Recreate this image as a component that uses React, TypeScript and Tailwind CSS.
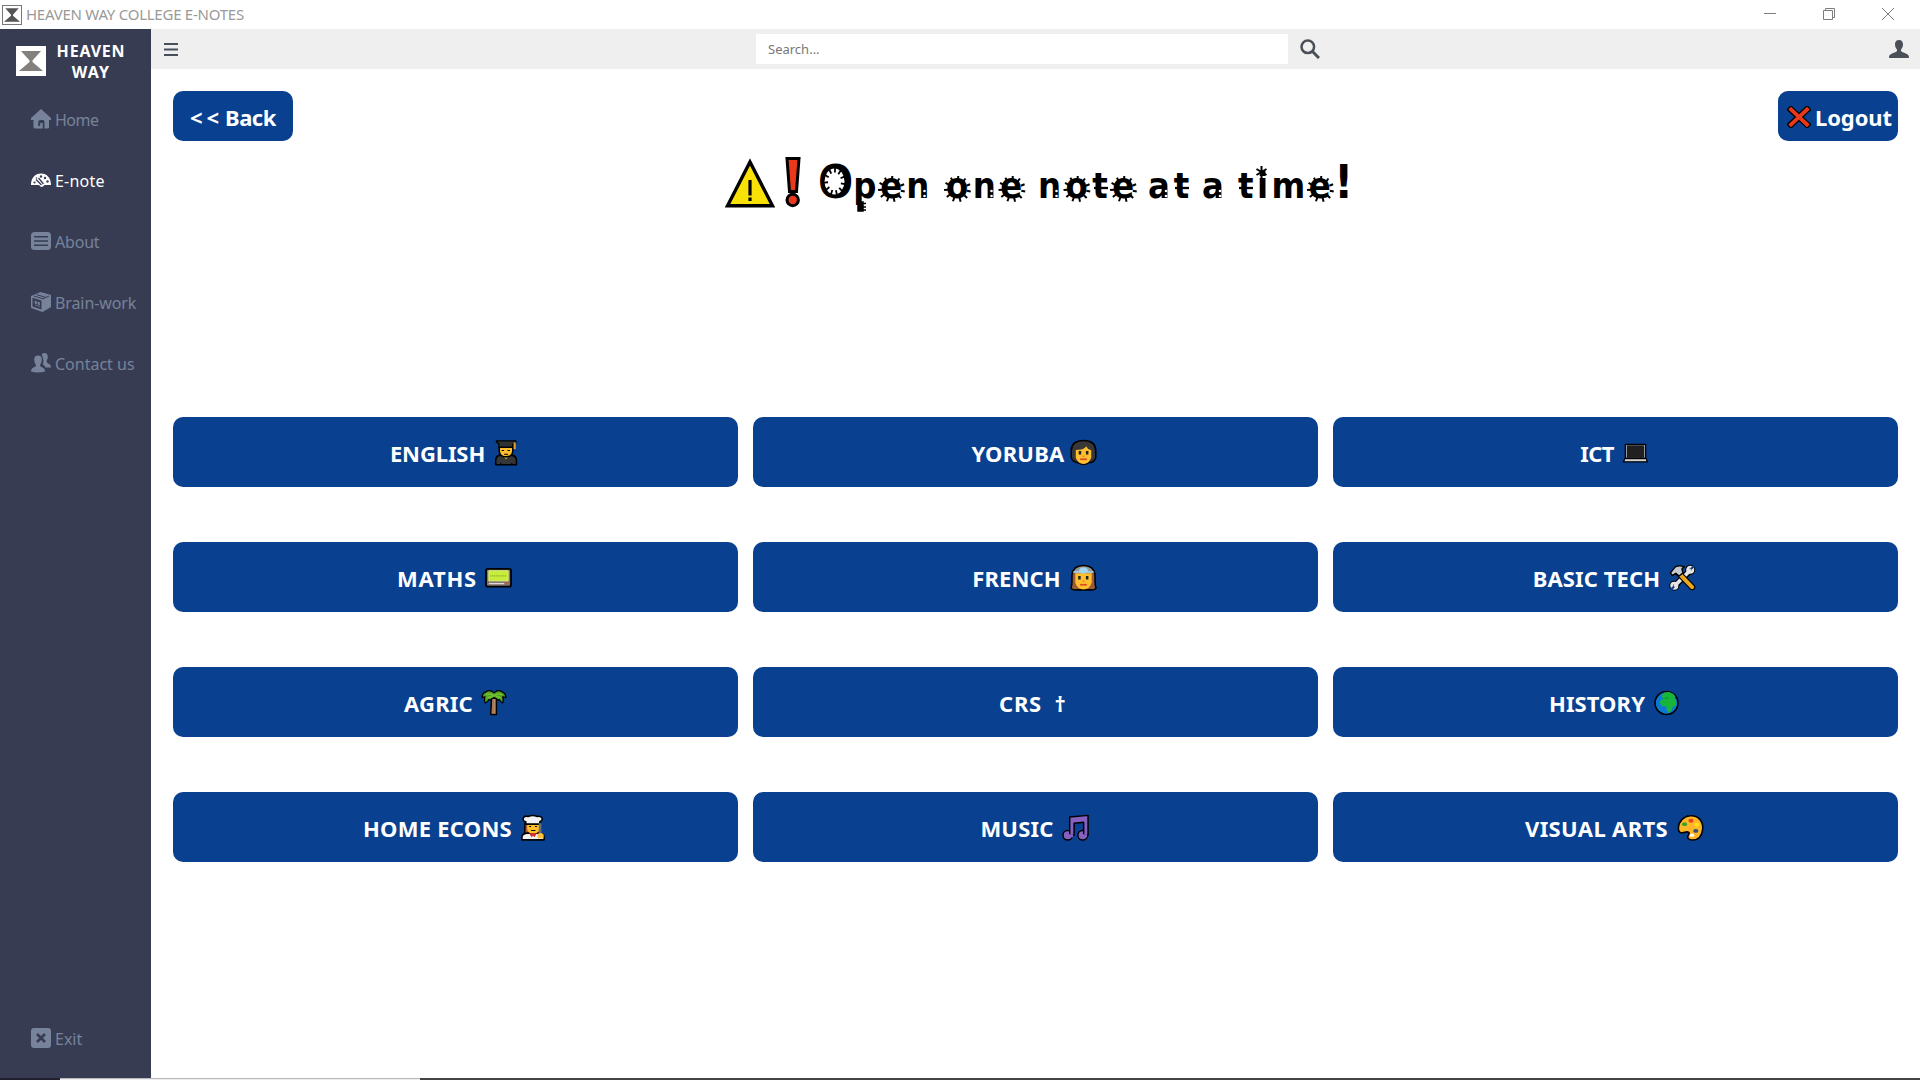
import React from "react";

type Icon = () => React.ReactElement;

const Emoji = ({ children }: { children: React.ReactNode }) => (
  <svg viewBox="0 0 28 28" className="h-7 w-[27px] shrink-0" stroke="#000" strokeWidth="1.6" strokeLinejoin="round">
    {children}
  </svg>
);

const Graduate: Icon = () => (
  <Emoji>
    <path d="M2.8 26.2v-4.5q0-5 5-5.5h11q5.500.5 5.500 5.500v4.500z" fill="#353638" />
    <path d="M10 16.500l3.500 4 3.500-4z" fill="#ffc83d" stroke="none" />
    <path d="M6.500 8h14v4.500q-1 5.500-7 5.500t-7-5.500z" fill="#ffbf2e" />
    <path d="M6 8V4.500L3.500 2.500v-1h20.200v2L20.500 5v3H6z" fill="#303234" strokeWidth="1.300" />
    <path d="M22.500 3v7" stroke="#e89b1c" strokeWidth="2.200" />
    <path d="M9 11.500h2.500M15 11.500h2.500M11.500 15.300h4" strokeWidth="1.100" />
    <path d="M8 24v2M19.500 24v2" strokeWidth="1.200" />
  </Emoji>
);

const Woman: Icon = () => (
  <Emoji>
    <path d="M1.300 11Q2 1 14 1t12.700 10v8q-1.500 5-6.500 5h-1q-5 4-10.400 0H8q-5-.500-6.700-5z" fill="#383838" />
    <path d="M6 11q8 0 11-4 1.500 3.500 5 4v8q-2.500 6.500-8 6.500T6 19z" fill="#ffbf2e" stroke="none" />
    <path d="M9 12h2.600v3.500H9zM16.500 12h2.600v3.500h-2.600z" fill="#222" stroke="none" />
    <path d="M10.500 20.500h7" stroke="#dc4b20" strokeWidth="1.800" />
    <path d="M13 17.300h2" stroke="#ec7b3d" strokeWidth="1.200" />
  </Emoji>
);

const Bride: Icon = () => (
  <Emoji>
    <path d="M2 11Q3 1 14 1t12 10v7q0 4 1 6.500-2 2.500-6 1.800H7q-4 .7-6-1.800 1-2.500 1-6.500z" fill="#9a5b37" />
    <path d="M5.500 9h17v10q-2.500 7-8.500 7t-8.500-7z" fill="#ffbf2e" stroke="none" />
    <path d="M3.500 8.500Q6 2 14 2t10.500 6.500z" fill="#8a9aa5" stroke="none" />
    <path d="M3.500 7.800h21M11.500 4h5l1.500 2.500-2 2h-4l-2-2z" stroke="#a5d6ee" fill="#a5d6ee" strokeWidth="1.600" />
    <path d="M8.500 12h2.600v3.500H8.500zM16.500 12h2.600v3.500h-2.600z" fill="#222" stroke="none" />
    <path d="M10.500 21H17.500" stroke="#dc4b20" strokeWidth="1.800" />
    <path d="M13 17.300h2" stroke="#ec7b3d" strokeWidth="1.200" />
  </Emoji>
);

const Laptop: Icon = () => (
  <Emoji>
    <path d="M3.500 5h21v14.500h-21z" fill="#b9bcc0" strokeWidth="1.400" />
    <path d="M5 6h18v13H5z" fill="#202020" stroke="none" />
    <path d="M3.300 19.500h21.400l1.800 3.600H1.500z" fill="#d2d3d5" strokeWidth="1.300" />
    <path d="M4 20.800h20" stroke="#a2a4a7" strokeWidth="1" />
  </Emoji>
);

const Pager: Icon = () => (
  <Emoji>
    <rect x="1" y="4.500" width="26" height="18.500" rx="2" fill="#85726c" strokeWidth="1.900" />
    <path d="M4 6.500h20v10.500H4z" fill="#c6ec3c" stroke="#d9f27a" strokeWidth="1" />
    <path d="M5.500 11.800h17" stroke="#9fbf2e" strokeWidth="2" strokeDasharray="1.200 .7" />
    <path d="M4 19.800h16" stroke="#ddd" strokeWidth="1.300" />
    <path d="M20.500 19.800H24" stroke="#e24b32" strokeWidth="1.300" />
  </Emoji>
);

const Tools: Icon = () => (
  <Emoji>
    <g strokeLinecap="round" fill="none">
      <path d="M5.500 22.500L22.500 6" strokeWidth="6.500" />
      <circle cx="5.500" cy="22" r="3" strokeWidth="4.500" />
      <circle cx="22" cy="5.500" r="3" strokeWidth="4.500" />
      <path d="M6.500 21.500L21.500 6.500" stroke="#e3e5e8" strokeWidth="3.800" />
      <circle cx="5.500" cy="22" r="2.800" stroke="#e3e5e8" strokeWidth="2.800" />
      <circle cx="22" cy="5.500" r="2.800" stroke="#e3e5e8" strokeWidth="2.800" />
      <path d="M4.500 23.500L1.500 26.500M23.500 4L26.500 1" stroke="#094190" strokeWidth="2.200" />
      <path d="M10 9L24 23.500" strokeWidth="6.500" />
      <path d="M12 11L24 23.500" stroke="#e9a820" strokeWidth="4.200" />
    </g>
    <path d="M1.500 8.500l5-6Q11 .500 16 2.500q-3 1-2.500 3l1 3-4 3.500-3.500-3-3.500 2.500z" fill="#c6c9cd" strokeWidth="1.400" />
  </Emoji>
);

const Palm: Icon = () => (
  <Emoji>
    <path d="M11 9h5v17h-6z" fill="#b58a67" />
    <path d="M12.500 11v13" stroke="#977050" strokeWidth="1.200" />
    <path d="M13.500 3.500Q9-.500 5 2.500 1 4 1 8.500l3-1q-1 3.500.500 6.500 2.500-1 3.500-3.500l2 .5q1-2 3.500-2.500 2.500.500 4 2.500l1.500-.5q1.500 2.500 3.500 3.500 1-3.500 0-6.500l3.500 1Q25.500 4 22 2.500q-4-3-8.500 1z" fill="#4fa325" strokeWidth="1.300" />
    <path d="M5 5.500q5-2 8.500 1 3.500-3 8.500-1M6.500 9q3-2 6-1.500M20.500 9q-3-2-5-1.500" stroke="#78c032" strokeWidth="1.700" fill="none" />
  </Emoji>
);

const Globe: Icon = () => (
  <Emoji>
    <circle cx="14" cy="14" r="11.900" fill="#0c78d4" />
    <path d="M8 7l4-4 5-.5 4 2 2.500 3-2 1 2.500 2-1 2 1.500.500-1 4-3 1-1 3.500-3 3-2.500-4v-3l-5-.500-2-3.500 1.500-3 3-1z" fill="#17b53a" stroke="none" />
    <path d="M12 9h4" stroke="#0a9030" strokeWidth="1" />
  </Emoji>
);

const Cook: Icon = () => (
  <Emoji>
    <path d="M5 9h17v14H5z" fill="#a65f36" />
    <path d="M2 26.300v-2.500q0-4 5-4.500h13q5 .500 5 4.500v2.500z" fill="#f3f3f3" />
    <path d="M7.500 10H20v5.500q-1.500 4.500-6.200 4.500T7.500 15.500z" fill="#ffbf2e" stroke="none" />
    <path d="M6 10V7.500Q2.500 6.500 3.500 3.500 5 1 8.500 2 13 0 18 2q4-1 5 2 .500 2.500-2.500 3.500V10z" fill="#f1f2f3" />
    <path d="M9.500 12.500h2M15.500 12.500h2M11.500 16.500h4.500" strokeWidth="1.100" />
    <path d="M9.500 19.500h8l-2.500 4-1.500-1.500-1.500 1.500z" fill="#d62d22" stroke="none" />
    <path d="M21 9v12" stroke="#6b7176" strokeWidth="3" />
    <rect x="18" y="19.500" width="6.500" height="5.500" rx="2" fill="#ffc23a" stroke="none" />
  </Emoji>
);

const Music: Icon = () => (
  <Emoji>
    <g strokeWidth="1.500" fill="#8661c1">
      <circle cx="6" cy="21.500" r="5" />
      <circle cx="21.500" cy="21.500" r="5" />
      <path d="M8 21.500V2.500L27 .900v20.600h-4.500V8l-10 1v12.500z" />
    </g>
    <path d="M2.500 20.500h9v3h-9zM18 20.500h8v3h-8z" fill="#8661c1" stroke="none" />
  </Emoji>
);

const Palette: Icon = () => (
  <Emoji>
    <path d="M13.500 1.300C22 .500 27 7 26.700 14.500 26 22 22 26.500 16 26.500c-4.500 0-6-3-4-5.500 2-3-1-3.500-4-2.500-4.500 1.500-7-.500-6.500-5C2 7 7 1.500 13.500 1.300z" fill="#ffb629" />
    <g stroke="none">
      <ellipse cx="14.500" cy="6.500" rx="2.700" ry="2" fill="#e2471d" />
      <ellipse cx="7.800" cy="10" rx="2.700" ry="2" fill="#3aa329" />
      <ellipse cx="20.500" cy="10.500" rx="2.500" ry="2.200" fill="#ffe21f" />
      <ellipse cx="19.500" cy="17" rx="2.700" ry="2" fill="#33537d" />
      <ellipse cx="15.500" cy="21.500" rx="2.300" ry="1.700" fill="#fff" />
    </g>
  </Emoji>
);

const CrossMark: Icon = () => (
  <svg viewBox="0 0 24 22" className="h-[22px] w-6 shrink-0" strokeLinecap="square">
    <path d="M4 3.500l16 15M20 3.500l-16 15" stroke="#000" strokeWidth="6.400" />
    <path d="M4 3.500l16 15M20 3.500l-16 15" stroke="#e8391b" strokeWidth="3.800" />
  </svg>
);

const Warning: Icon = () => (
  <svg viewBox="0 0 50 50" className="mt-px h-[50px] w-[50px] shrink-0">
    <path d="M25 4L47.500 47.800H2.500z" fill="#f9e108" stroke="#000" strokeWidth="3.400" />
    <path d="M25 22v15.500M25 39.500v3.500" stroke="#000" strokeWidth="3.200" />
  </svg>
);

const Exclaim: Icon = () => (
  <svg viewBox="0 0 16 52" className="-mt-px h-[52px] w-4 shrink-0" fill="#e9381c" stroke="#000" strokeWidth="3">
    <path d="M2 2.500h12l-2.500 33h-7z" />
    <circle cx="7.700" cy="44" r="5.700" />
  </svg>
);

const NavSvg = ({ children }: { children: React.ReactNode }) => (
  <svg viewBox="0 0 20 20" className="h-5 w-5 shrink-0" fill="currentColor">{children}</svg>
);

const HomeIcon: Icon = () => (
  <NavSvg>
    <path d="M10 0l10 9v2h-2v7q0 1.500-1.500 1.500h-3V13q0-2-1.500-2H9q-1.800 0-1.800 2.500V17h2v-3h2.500v5.500H4Q2.500 19.500 2.500 18v-7H0V9z" />
  </NavSvg>
);

const GaugeIcon: Icon = () => (
  <NavSvg>
    <path d="M0 15C0 8 4 3.500 10 3.500S20 8 20 15h-6.500L12 16.500 10 17l-2-2H0z" />
    <g className="text-[#383c53]">
      <path d="M5 9.500l5.500 5.500M7.500 8l5 6" stroke="currentColor" strokeWidth="1.300" />
      <circle cx="10" cy="6.500" r="1.200" />
      <circle cx="14" cy="8" r="1.200" />
      <circle cx="16.500" cy="11.500" r="1.200" />
      <circle cx="3.500" cy="12.500" r="1.100" />
      <circle cx="5.500" cy="8" r=".8" />
    </g>
  </NavSvg>
);

const ListIcon: Icon = () => (
  <NavSvg>
    <rect x="0" y="1" width="20" height="18" rx="3.500" />
    <path d="M3 5.800h14M3 10h14M3 14.200h14" stroke="#383c53" strokeWidth="1.500" />
  </NavSvg>
);

const BoxIcon: Icon = () => (
  <NavSvg>
    <path d="M0 4L9.500 0 20 3v12l-8.500 5L0 16z" />
    <path d="M1.500 5.800l9 2.800v9l-9-3z" fill="#383c53" />
    <path d="M2.800 4l9.200 2.800L18 4M5.500 2.600l9 2.700" stroke="#383c53" strokeWidth="1" fill="none" />
    <path d="M4 9l1.500.5v2.500L4 11.500zM7 10l1.500.5V13L7 12.500zM4 13l5 1.700" stroke="currentColor" strokeWidth=".7" />
  </NavSvg>
);

const UsersIcon: Icon = () => (
  <NavSvg>
    <path d="M10.500 1.500Q13.500-1 16 1q1.800 3-.3 6.500-.5 2 1.500 3 3 1.200 2.800 4h-5.500Q14 12.500 11.800 11.500 13.500 6 10.500 1.500z" />
    <path d="M7 2.500q4 0 3.800 4.500-.3 3-1.600 4.500-.4 2 1.300 2.500 3.500 1 3.500 4.500Q7 20.500 0 18.500q0-3.500 3.500-4.500 1.700-.5 1.300-2.500Q3.500 10 3.200 7 3 2.500 7 2.500z" />
  </NavSvg>
);

const ExitIcon: Icon = () => (
  <NavSvg>
    <rect width="20" height="20" rx="3" />
    <path d="M6 6l8 8M14 6l-8 8" stroke="#383c53" strokeWidth="2.600" />
  </NavSvg>
);

const Hourglass = ({ className, framed }: { className: string; framed?: boolean }) => (
  <svg viewBox="0 0 30 30" className={className}>
    <rect x="0.750" y="0.750" width="28.500" height="28.500" fill="#fff" stroke={framed ? "#777" : "#fff"} strokeWidth="1.500" />
    <path d="M5 5h20l-8.500 9.500v1.500L27 25H3l10.500-9v-1.500z" fill={framed ? "#555" : "#83807d"} />
  </svg>
);

const nav: { label: string; icon: Icon; tone: string; track: string }[] = [
  { label: "Home", icon: HomeIcon, tone: "text-[#76839a]", track: "tracking-[-0.5px]" },
  { label: "E-note", icon: GaugeIcon, tone: "text-white", track: "tracking-[0.2px]" },
  { label: "About", icon: ListIcon, tone: "text-[#76839a]", track: "tracking-[-0.2px]" },
  { label: "Brain-work", icon: BoxIcon, tone: "text-[#76839a]", track: "tracking-[-0.1px]" },
  { label: "Contact us", icon: UsersIcon, tone: "text-[#76839a]", track: "tracking-[0px]" },
];

const subjects: { label: string; icon?: Icon; track: string }[] = [
  { label: "ENGLISH", icon: Graduate, track: "tracking-[-0.1px] ml-px" },
  { label: "YORUBA", icon: Woman, track: "tracking-[0.2px] mr-[-2px]" },
  { label: "ICT", icon: Laptop, track: "tracking-[-0.6px]" },
  { label: "MATHS", icon: Pager, track: "tracking-[0.8px]" },
  { label: "FRENCH", icon: Bride, track: "tracking-[0.1px] mr-px" },
  { label: "BASIC TECH", icon: Tools, track: "tracking-[0.1px] mr-px" },
  { label: "AGRIC", icon: Palm, track: "tracking-[0.2px] ml-[3px]" },
  { label: "CRS", track: "tracking-[0.8px]" },
  { label: "HISTORY", icon: Globe, track: "tracking-[0.1px]" },
  { label: "HOME ECONS", icon: Cook, track: "tracking-[0.25px] ml-px" },
  { label: "MUSIC", icon: Music, track: "tracking-[0.2px]" },
  { label: "VISUAL ARTS", icon: Palette, track: "tracking-[0.35px] mr-px" },
];

const spiked: [number, number][] = [[166.5, 32], [232.5, 32], [287, 32], [352, 32], [398.5, 32], [595.5, 32]];
const studs = [199.5, 266.5, 331.5, 441, 495];
const crossed = [376, 457, 521];
const rays = Array.from({ length: 11 }, (_, i) => (i * Math.PI * 2) / 11 + 0.2);

/* Toothed edges, studs and stars that decorate the headline lettering. */
const Ornaments = () => (
  <svg viewBox="0 0 624 56" className="pointer-events-none absolute left-0 top-0 h-14 w-[624px]" stroke="#000" strokeWidth="2">
    {spiked.map(([x, y]) =>
      rays.map((a, i) => (
        <path key={`${x}-${i}`} d={`M${x + Math.cos(a) * 9.500} ${y + Math.sin(a) * 9}L${x + Math.cos(a) * 13.500} ${y + Math.sin(a) * 13}`} />
      ))
    )}
    <ellipse cx="109.500" cy="24.500" rx="10" ry="13" fill="#fff" stroke="none" />
    {rays.map((a, i) => (
      <path key={i} d={`M${109.500 + Math.cos(a) * 10.500} ${24.500 + Math.sin(a) * 13.500}L${109.500 + Math.cos(a) * 6.500} ${24.500 + Math.sin(a) * 9}`} strokeWidth="1.800" />
    ))}
    {studs.map((x) => (
      <g key={x} fill="#fff" stroke="none">
        <circle cx={x} cy="34" r="1.300" />
        <circle cx={x} cy="39" r="1.300" />
      </g>
    ))}
    {crossed.map((x) => (
      <path key={x} d={`M${x - 7} 31h14`} strokeWidth="2.300" />
    ))}
    <path d="M133 45h5v9h-5zM137 46.500h4M137 50h4M137 53h4" fill="#000" strokeWidth="1.500" />
    <path d="M536.500 9v12M531.500 12l10 6M541.500 12l-10 6" />
  </svg>
);

export default function App() {
  return (
    <div className="flex h-[1080px] w-[1920px] flex-col overflow-hidden bg-white font-['Noto_Sans',sans-serif]">
      <header className="flex h-[29px] shrink-0 items-center pl-0.5 pr-[26px]">
        <Hourglass framed className="h-5 w-5" />
        <span className="ml-1 whitespace-nowrap text-[15px] tracking-[-0.25px] text-[#999]">HEAVEN WAY COLLEGE E-NOTES</span>
        <div className="ml-auto flex -translate-y-px items-center gap-[47px] text-[#7d7d7d]">
          <svg viewBox="0 0 12 12" className="h-3 w-3" stroke="currentColor"><path d="M0 5.500h12" /></svg>
          <svg viewBox="0 0 12 12" className="h-3 w-3" stroke="currentColor" fill="none"><path d="M.5 2.500h9v9h-9zM2.500 2.500v-2h9v9h-2" /></svg>
          <svg viewBox="0 0 12 12" className="h-3 w-3" stroke="currentColor"><path d="M0 0l12 12M12 0L0 12" /></svg>
        </div>
      </header>

      <div className="flex min-h-0 flex-1">
        <aside className="flex w-[151px] shrink-0 flex-col bg-[#383c53]">
          <div className="flex h-[60px] items-center pl-4 pt-1">
            <Hourglass className="h-[30px] w-[30px] shrink-0" />
            <div className="ml-[10px] mt-px w-[70px] text-center text-[16px] font-bold leading-[21px] text-white">
              <div className="tracking-[0.8px]">HEAVEN</div>
              <div className="tracking-[1.2px]">WAY</div>
            </div>
          </div>
          <nav className="-mt-px flex flex-col">
            {nav.map(({ label, icon: I, tone, track }) => (
              <div key={label} className={`flex h-[61px] items-center whitespace-nowrap pl-[31px] ${tone}`}>
                <I />
                <span className={`ml-1 mt-0.5 text-[16px] ${track}`}>{label}</span>
              </div>
            ))}
          </nav>
          <div className="mb-[30px] mt-auto flex items-center pl-[31px] text-[#76839a]">
            <ExitIcon />
            <span className="-mb-px ml-1 mt-px text-[16px] leading-5">Exit</span>
          </div>
        </aside>

        <div className="flex min-w-0 flex-1 flex-col">
          <div className="flex h-10 shrink-0 items-center bg-[#efefef] pl-[13px] pr-[11px]">
            <svg viewBox="0 0 14 13" className="h-[13px] w-3.5" stroke="#47505a" strokeWidth="2"><path d="M0 1h14M0 6.500h14M0 12h14" /></svg>
            <div className="ml-[578px] flex h-[30px] w-[532px] items-center bg-white pl-3 pt-0.5 text-[13px] text-[#777]">Search...</div>
            <svg viewBox="0 0 20 20" className="ml-3 h-5 w-5" fill="none" stroke="#4b5058"><circle cx="7.800" cy="7.800" r="6.300" strokeWidth="2.500" /><path d="M12 12l7 7" strokeWidth="3" /></svg>
            <svg viewBox="0 0 20 18" className="ml-auto h-[18px] w-5" fill="#4b5058"><path d="M10 0c3 0 4.200 2 4 5-.2 2.500-1.200 3.500-2 4.500-.2 2 .5 2.200 2.500 3 3.500 1.300 5.500 2 5.500 5.500H0c0-3.500 2-4.200 5.500-5.500 2-.8 2.700-1 2.500-3-.8-1-1.800-2-2-4.500-.2-3 1-5 4-5z" /></svg>
          </div>

          <main className="flex flex-1 flex-col px-[22px] pt-[22px]">
            <div className="flex justify-between text-[22px] font-bold text-white">
              <button className="flex h-[50px] w-[120px] items-center whitespace-pre rounded-[10px] bg-[#094190] pl-[15px] pt-0.5">
                <span className="w-[37px] tracking-[4px]">&lt;&lt;</span>
                <span className="tracking-[-0.5px]">Back</span>
              </button>
              <button className="flex h-[50px] w-[120px] items-center rounded-[10px] bg-[#094190] pl-[9px] pt-0.5">
                <CrossMark />
                <span className="ml-1 tracking-[-0.1px]">Logout</span>
              </button>
            </div>

            <h1 className="relative ml-[552px] mt-4 flex h-[54px] w-[624px] font-['DejaVu_Sans_Condensed','DejaVu_Sans',sans-serif] text-[36px] font-bold leading-[50px] text-black">
              <span className="flex w-[93px] gap-[10px]"><Warning /><Exclaim /></span>
              <span className="mt-1 w-[128px] tracking-[4px]"><span className="text-[46px] leading-[0] tracking-[0px]">O</span>pen</span>
              <span className="mt-1 w-[92px] tracking-[4.500px]">one</span>
              <span className="mt-1 w-[110px] tracking-[4.500px]">note</span>
              <span className="mt-1 w-[54px] tracking-[4px]">at</span>
              <span className="mt-1 w-9">a</span>
              <span className="mt-1 w-[110px] tracking-[3.500px]">time<span className="text-[46px] leading-[0] tracking-[0px]">!</span></span>
              <Ornaments />
            </h1>

            <div className="mt-[206px] grid grid-cols-3 gap-x-[15px] gap-y-[55px]">
              {subjects.map(({ label, icon: I, track }) => (
                <button key={label} className="flex h-[70px] items-center justify-center gap-2 whitespace-nowrap rounded-[10px] bg-[#094190] pr-0.5 text-[22px] font-bold text-white">
                  <span className={`pt-0.5 ${track}`}>{label}</span>
                  {I ? <span className="pt-0.5"><I /></span> : <span className="w-[20px] pt-0.5 text-center">†</span>}
                </button>
              ))}
            </div>
          </main>
        </div>
      </div>

      <div className="flex h-0.5 shrink-0 bg-[#444]">
        <div className="w-[60px] bg-[#201f30]" />
        <div className="w-[360px] border-t border-[#b9b9bb] bg-[#eeeef2]" />
      </div>
    </div>
  );
}
